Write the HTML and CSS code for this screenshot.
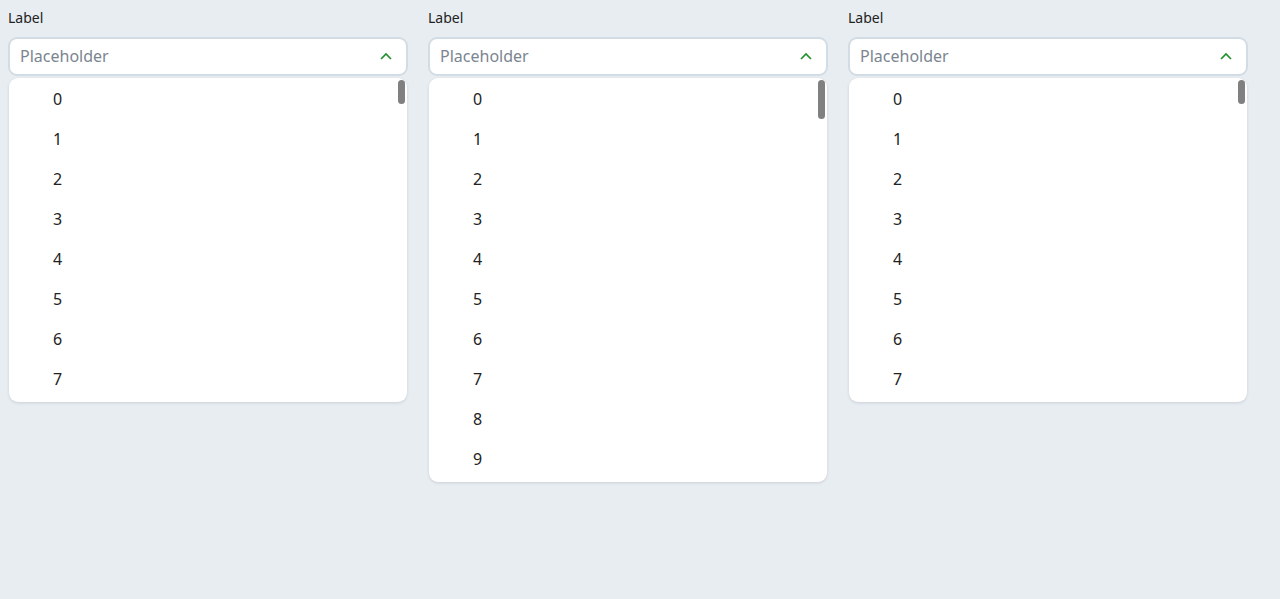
FILE: index.html
```html
<!DOCTYPE html>
<html>
<head>
<meta charset="utf-8">
<link rel="stylesheet" href="styles.css">
</head>
<body>
<div class="row">
  <div class="field">
    <div class="label">Label</div>
    <div class="input"><span class="ph">Placeholder</span>
      <svg class="chev" width="12" height="8" viewBox="0 0 12 8"><path d="M1 7 L6 2 L11 7" fill="none" stroke="#1f8f2a" stroke-width="1.6"/></svg>
    </div>
    <div class="menu">
      <div class="thumb short"></div>
      <div class="item">0</div><div class="item">1</div><div class="item">2</div><div class="item">3</div>
      <div class="item">4</div><div class="item">5</div><div class="item">6</div><div class="item">7</div>
    </div>
  </div>
  <div class="field">
    <div class="label">Label</div>
    <div class="input"><span class="ph">Placeholder</span>
      <svg class="chev" width="12" height="8" viewBox="0 0 12 8"><path d="M1 7 L6 2 L11 7" fill="none" stroke="#1f8f2a" stroke-width="1.6"/></svg>
    </div>
    <div class="menu">
      <div class="thumb long"></div>
      <div class="item">0</div><div class="item">1</div><div class="item">2</div><div class="item">3</div>
      <div class="item">4</div><div class="item">5</div><div class="item">6</div><div class="item">7</div>
      <div class="item">8</div><div class="item">9</div>
    </div>
  </div>
  <div class="field">
    <div class="label">Label</div>
    <div class="input"><span class="ph">Placeholder</span>
      <svg class="chev" width="12" height="8" viewBox="0 0 12 8"><path d="M1 7 L6 2 L11 7" fill="none" stroke="#1f8f2a" stroke-width="1.6"/></svg>
    </div>
    <div class="menu">
      <div class="thumb short"></div>
      <div class="item">0</div><div class="item">1</div><div class="item">2</div><div class="item">3</div>
      <div class="item">4</div><div class="item">5</div><div class="item">6</div><div class="item">7</div>
    </div>
  </div>
</div>
</body>
</html>
```
FILE: styles.css
```css
html, body { margin: 0; padding: 0; }
body {
  background: #e8edf1;
  font-family: "Noto Sans", "Open Sans", sans-serif;
  color: #222;
  padding: 8px;
  height: 599px;
  box-sizing: border-box;
}
.row { display: flex; gap: 20px; align-items: flex-start; }
.field { width: 400px; display: flex; flex-direction: column; }
.label { font-size: 14px; line-height: 20px; height: 20px; color: #222; margin-bottom: 9px; }
.input {
  height: 39px;
  box-sizing: border-box;
  background: #fff;
  border: 2px solid #d2dce5;
  border-radius: 9px;
  display: flex;
  align-items: center;
  justify-content: space-between;
  padding: 0 14px 2px 10px;
}
.ph { font-size: 16px; color: #7b8590; }
.chev { display: block; margin-top: 0; }
.menu {
  position: relative;
  margin: 2px 1px 0;
  background: #fff;
  border-radius: 9px;
  padding: 1px 0 3px;
  box-shadow: 0 1px 3px rgba(60, 80, 100, 0.18);
}
.item {
  height: 40px;
  line-height: 40px;
  padding-left: 44px;
  font-size: 16px;
  color: #222;
}
.thumb {
  position: absolute;
  right: 2px;
  top: 2px;
  width: 7px;
  background: #808080;
  border-radius: 4px;
}
.thumb.short { height: 24px; }
.thumb.long { height: 39px; }
```
